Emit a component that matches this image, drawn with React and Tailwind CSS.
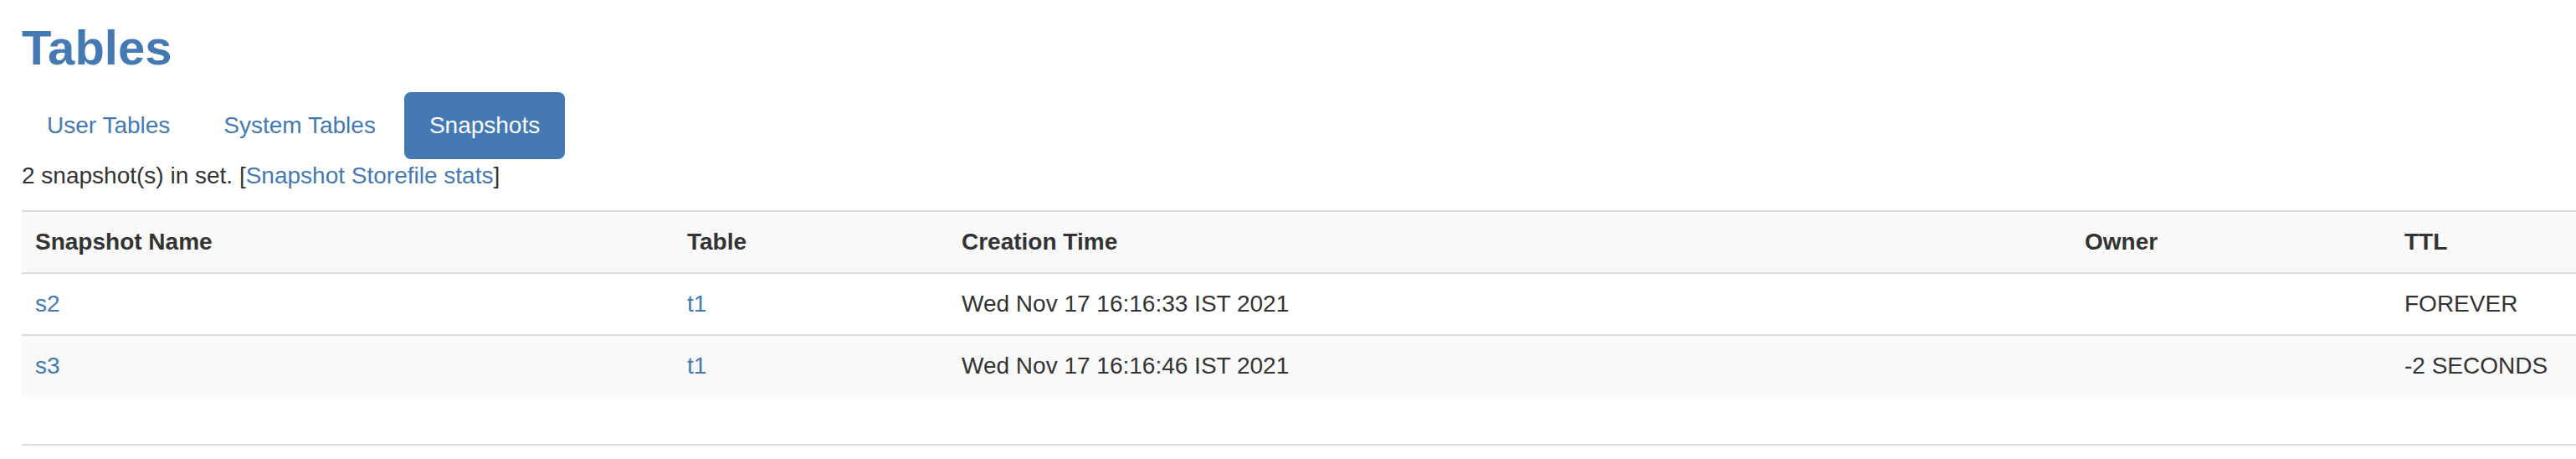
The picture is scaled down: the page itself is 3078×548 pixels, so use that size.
const snapshots = [
  { name: "s2", table: "t1", created: "Wed Nov 17 16:16:33 IST 2021", owner: "", ttl: "FOREVER" },
  { name: "s3", table: "t1", created: "Wed Nov 17 16:16:46 IST 2021", owner: "", ttl: "-2 SECONDS" },
];

function App() {
  return (
    <div className="min-h-[548px] bg-white pl-[26px] font-['Liberation_Sans',Arial,sans-serif] text-[28px] leading-[40px] text-[#333]">
      {/* Page title */}
      <h2 className="pt-[24px] text-[58px] font-bold leading-[66px] text-[#4479b3]">Tables</h2>

      {/* Pills */}
      <ul className="mt-[20px] flex gap-[4px]">
        <li>
          <a className="block rounded-[8px] px-[30px] py-[20px] text-[#4479b3]">User Tables</a>
        </li>
        <li>
          <a className="block rounded-[8px] px-[30px] py-[20px] text-[#4479b3]">System Tables</a>
        </li>
        <li>
          <a className="block rounded-[8px] bg-[#4479b3] px-[30px] py-[20px] text-white">Snapshots</a>
        </li>
      </ul>

      <p className="mb-[21px]">
        2 snapshot(s) in set. [<a className="text-[#4479b3]">Snapshot Storefile stats</a>]
      </p>

      {/* Snapshot table */}
      <table className="w-full table-fixed border-collapse border-t-2 border-[#ddd]">
        <colgroup>
          <col className="w-[779px]" />
          <col className="w-[328px]" />
          <col className="w-[1342px]" />
          <col className="w-[382px]" />
          <col />
        </colgroup>
        <thead className="bg-[#f9f9f9]">
          <tr className="border-b-2 border-[#ddd]">
            <th className="p-[16px] text-left font-bold">Snapshot Name</th>
            <th className="p-[16px] text-left font-bold">Table</th>
            <th className="p-[16px] text-left font-bold">Creation Time</th>
            <th className="p-[16px] text-left font-bold">Owner</th>
            <th className="p-[16px] text-left font-bold">TTL</th>
          </tr>
        </thead>
        <tbody>
          {snapshots.map((s, i) => (
            <tr key={s.name} className={i % 2 === 1 ? "border-t-2 border-[#ddd] bg-[#f9f9f9]" : "bg-white"}>
              <td className="p-[16px] text-[#4479b3]">{s.name}</td>
              <td className="p-[16px] text-[#4479b3]">{s.table}</td>
              <td className="p-[16px]">{s.created}</td>
              <td className="p-[16px]">{s.owner}</td>
              <td className="p-[16px] whitespace-nowrap">{s.ttl}</td>
            </tr>
          ))}
        </tbody>
      </table>

      <div className="mt-[57px] border-t-2 border-[#ddd]"></div>
    </div>
  );
}

export default App;
